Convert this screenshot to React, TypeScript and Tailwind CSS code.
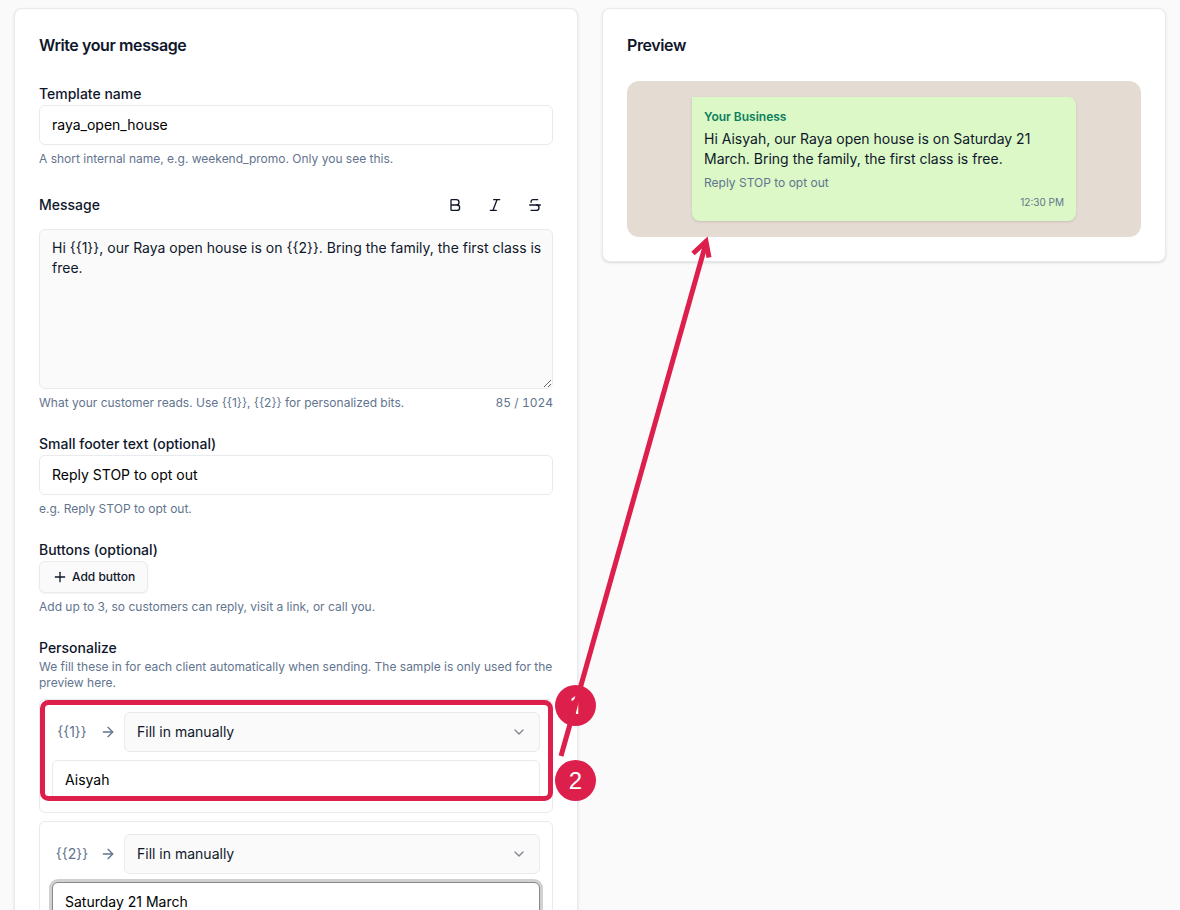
import { useState, type ReactNode } from 'react'
import { ArrowRight, Bold, ChevronDown, Italic, Plus, Strikethrough } from 'lucide-react'

const MAX_LENGTH = 1024

const inputClass =
  'block h-10 w-full rounded-md border bg-white px-3 pb-0.5 text-sm text-black outline-none'

const idleClass = 'border-[#e8eaed] focus:border-[#888888] focus:ring-3 focus:ring-[#d0d0d0]'

const activeClass = 'border-[#888888] ring-3 ring-[#d0d0d0]'

const labelClass = 'mb-px block text-sm font-medium text-slate-900'

const hintClass = 'text-xs text-slate-500'

function Card({ title, children }: { title: string; children: ReactNode }) {
  return (
    <section className="rounded-lg border border-[#e8eaed] bg-white p-6 shadow-sm">
      <h2 className="text-base font-semibold tracking-tight text-slate-900">{title}</h2>
      {children}
    </section>
  )
}

function FormatButton({ label, children }: { label: string; children: ReactNode }) {
  return (
    <button
      type="button"
      aria-label={label}
      className="flex h-[30px] w-9 items-center justify-center rounded-md text-slate-900 hover:bg-slate-100"
    >
      {children}
    </button>
  )
}

interface VariableProps {
  index: number
  value: string
  active?: boolean
  onChange: (value: string) => void
}

function VariableField({ index, value, active, onChange }: VariableProps) {
  return (
    <div className="rounded-md border border-[#e8eaed] p-3">
      <div className="flex items-center gap-2">
        <label htmlFor={`source-${index}`} className="w-10 text-center text-sm text-slate-500">
          {`{{${index}}}`}
        </label>
        <ArrowRight className="size-4 text-slate-500" />
        <div className="relative flex-1">
          <select
            id={`source-${index}`}
            className="block h-10 w-full appearance-none rounded-md border border-[#e8eaed] bg-[#fafafa] px-3 text-sm text-slate-900 outline-none"
          >
            <option>Fill in manually</option>
            <option>Client name</option>
          </select>
          <ChevronDown className="pointer-events-none absolute top-3 right-[13px] size-4 text-slate-900 opacity-50" />
        </div>
      </div>
      <input
        aria-label={`Sample for {{${index}}}`}
        value={value}
        onChange={e => onChange(e.target.value)}
        className={`mt-2 ${inputClass} ${active ? activeClass : idleClass}`}
      />
    </div>
  )
}

// Numbered callouts and the arrow that links the samples to the preview
function Callouts() {
  return (
    <svg
      className="pointer-events-none absolute top-0 left-0 overflow-visible"
      width="1180"
      height="910"
      viewBox="0 0 1180 910"
      fill="none"
      aria-hidden="true"
    >
      <rect x="42.5" y="702.5" width="508" height="96" rx="6" stroke="#dc1f4b" strokeWidth="5" />
      <circle cx="575.5" cy="705.5" r="20.5" fill="#dc1f4b" />
      <text x="575.5" y="714" fill="white" fontSize="24" textAnchor="middle" className="font-[Inter,sans-serif]">
        1
      </text>
      <path d="M561 756L706 243" stroke="#dc1f4b" strokeWidth="5" />
      <path d="M693 253.5L706 241.5L709 257.5" stroke="#dc1f4b" strokeWidth="5" />
      <circle cx="575.5" cy="780.5" r="20.5" fill="#dc1f4b" />
      <text x="575.5" y="789" fill="white" fontSize="24" textAnchor="middle" className="font-['Liberation_Sans',sans-serif]">
        2
      </text>
    </svg>
  )
}

export default function App() {
  const [name, setName] = useState('raya_open_house')
  const [message, setMessage] = useState(
    'Hi {{1}}, our Raya open house is on {{2}}. Bring the family, the first class is free.'
  )
  const [footer, setFooter] = useState('Reply STOP to opt out')
  const [samples, setSamples] = useState(['Aisyah', 'Saturday 21 March'])

  const setSample = (index: number, value: string) =>
    setSamples(prev => prev.map((s, i) => (i === index ? value : s)))

  const preview = message.replace(/\{\{(\d+)\}\}/g, (match, n) => samples[Number(n) - 1] ?? match)

  return (
    <main className="relative min-h-screen bg-[#fafafa] px-3.5 py-2 font-[Inter,sans-serif]">
      <div className="grid grid-cols-2 items-start gap-6">
        <Card title="Write your message">
          <form className="mt-[27px] flex flex-col gap-[23px]">
            <div>
              <label htmlFor="name" className={labelClass}>Template name</label>
              <input
                id="name"
                value={name}
                onChange={e => setName(e.target.value)}
                className={`${inputClass} ${idleClass}`}
              />
              <p className={`mt-1.5 ${hintClass}`}>
                A short internal name, e.g. weekend_promo. Only you see this.
              </p>
            </div>

            <div>
              <div className="mb-[9px] flex items-center justify-between">
                <label htmlFor="message" className="text-sm font-medium text-slate-900">Message</label>
                <div className="flex gap-1">
                  <FormatButton label="Bold"><Bold className="size-4" /></FormatButton>
                  <FormatButton label="Italic"><Italic className="size-4" /></FormatButton>
                  <FormatButton label="Strikethrough"><Strikethrough className="size-4" /></FormatButton>
                </div>
              </div>
              <textarea
                id="message"
                value={message}
                onChange={e => setMessage(e.target.value)}
                className="block h-40 w-full rounded-md border border-[#e8eaed] bg-[#fafafa] py-2 pr-1 pl-3 text-sm text-slate-900 outline-none"
              />
              <div className={`mt-1.5 flex justify-between ${hintClass}`}>
                <p>{'What your customer reads. Use {{1}}, {{2}} for personalized bits.'}</p>
                <span className="tabular-nums">{message.length} / {MAX_LENGTH}</span>
              </div>
            </div>

            <div>
              <label htmlFor="footer" className={labelClass}>Small footer text (optional)</label>
              <input
                id="footer"
                value={footer}
                onChange={e => setFooter(e.target.value)}
                className={`${inputClass} ${idleClass}`}
              />
              <p className={`mt-1.5 ${hintClass}`}>e.g. Reply STOP to opt out.</p>
            </div>

            <div>
              <h3 className={labelClass}>Buttons (optional)</h3>
              <button
                type="button"
                className="flex h-8 items-center gap-1 rounded-md border border-[#e8eaed] bg-[#fafafa] px-3 text-xs font-medium text-slate-900 shadow-xs"
              >
                <Plus className="size-4" />
                Add button
              </button>
              <p className={`mt-1.5 ${hintClass}`}>
                Add up to 3, so customers can reply, visit a link, or call you.
              </p>
            </div>

            <div>
              <h3 className={labelClass}>Personalize</h3>
              <p className={hintClass}>
                We fill these in for each client automatically when sending. The sample is only used for the preview here.
              </p>
              <div className="mt-2 flex flex-col gap-2">
                <VariableField index={1} value={samples[0]} onChange={v => setSample(0, v)} />
                <VariableField index={2} value={samples[1]} onChange={v => setSample(1, v)} active />
              </div>
            </div>
          </form>
        </Card>

        <Card title="Preview">
          <div className="mt-6 rounded-xl bg-[#e4dcd3] p-4">
            <div className="mx-auto max-w-sm rounded-lg rounded-tl-none bg-[#dbf8c6] px-3 pt-3 pb-[11px] shadow-sm">
              <p className="text-xs font-semibold text-[#0a7f5c]">Your Business</p>
              <p className="mt-1 text-sm text-slate-900">{preview}</p>
              <p className="mt-1.5 text-xs text-slate-500">{footer}</p>
              <p className="mt-[3px] text-right text-[10px] leading-4 text-slate-500">12:30 PM</p>
            </div>
          </div>
        </Card>
      </div>
      <Callouts />
    </main>
  )
}
